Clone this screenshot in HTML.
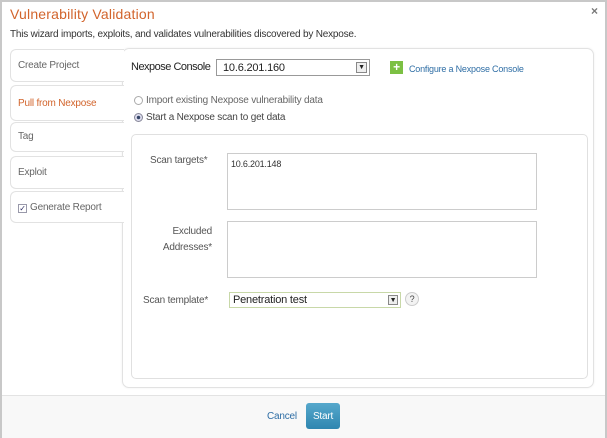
<!DOCTYPE html>
<html><head><style>
*{margin:0;padding:0;box-sizing:border-box}
body{width:607px;height:438px;overflow:hidden;background:#fff;font-family:"Liberation Sans",sans-serif;font-size:10px;color:#444;position:relative;letter-spacing:-0.2px}
.frame{position:absolute;left:0;top:0;width:607px;height:438px;border:2px solid #c8c8c8;border-bottom:none}
.a{position:absolute}
.tab{position:absolute;left:10px;width:114px;background:#fff;border:1px solid #e2e2e2;border-right:none;border-radius:6px 0 0 6px;padding:10px 0 0 7px;color:#666;font-size:10px}
.ta{position:absolute;background:#fff;border:1px solid #ccc}
</style></head><body>
<div class="frame"></div>
<div class="a" style="left:10px;top:6px;font-size:14px;color:#d2642c;letter-spacing:0.2px">Vulnerability Validation</div>
<div class="a" style="left:591px;top:4px;font-size:12px;color:#777;font-weight:bold">×</div>
<div class="a" style="left:10px;top:29px;font-size:10px;color:#333">This wizard imports, exploits, and validates vulnerabilities discovered by Nexpose.</div>

<div class="a" style="left:122px;top:48px;width:472px;height:340px;border:1px solid #e2e2e2;border-radius:7px;box-shadow:0 0 2px #eee"></div>
<div class="tab" style="top:49px;height:33px">Create Project</div>
<div class="tab" style="top:85px;height:36px;color:#d2642c;z-index:2;padding-top:12px">Pull from Nexpose</div>
<div class="tab" style="top:122px;height:30px;padding-top:8px">Tag</div>
<div class="tab" style="top:156px;height:33px">Exploit</div>
<div class="tab" style="top:191px;height:32px;padding-top:10px"><span style="display:inline-block;width:9px;height:9px;border:1px solid #99a;font-size:8px;line-height:8px;text-align:center;color:#336;vertical-align:-1px;margin-right:3px">✓</span>Generate Report</div>

<div class="a" style="left:131px;top:61px;font-size:11px;color:#222;letter-spacing:-0.5px">Nexpose Console</div>
<div class="a" style="left:216px;top:59px;width:154px;height:17px;border:1px solid #999;font-size:11px;color:#222;padding:2px 0 0 6px">10.6.201.160<span style="position:absolute;right:2px;top:2px;width:11px;height:11px;border:1px solid #888;background:#eee;font-size:7px;line-height:10px;text-align:center">▼</span></div>
<div class="a" style="left:390px;top:61px;width:13px;height:13px;background:#7cc043;color:#fff;font-weight:bold;font-size:12px;line-height:12px;text-align:center">+</div>
<div class="a" style="left:409px;top:64px;font-size:9px;color:#2f6ea5">Configure a Nexpose Console</div>

<div class="a" style="left:134px;top:96px;width:9px;height:9px;border:1px solid #aaa;border-radius:50%"></div>
<div class="a" style="left:146px;top:95px;color:#666">Import existing Nexpose vulnerability data</div>
<div class="a" style="left:134px;top:113px;width:9px;height:9px;border:1px solid #889;border-radius:50%;background:radial-gradient(#346 30%,#dde 40%)"></div>
<div class="a" style="left:146px;top:112px;color:#444">Start a Nexpose scan to get data</div>

<div class="a" style="left:131px;top:134px;width:457px;height:245px;border:1px solid #e0e0e0;border-radius:5px"></div>
<div class="a" style="left:150px;top:155px;color:#555">Scan targets*</div>
<div class="ta" style="left:227px;top:153px;width:310px;height:57px;font-size:9px;color:#333;padding:5px 0 0 3px">10.6.201.148</div>
<div class="a" style="left:150px;top:224px;color:#555;text-align:right;width:62px;line-height:16px">Excluded Addresses*</div>
<div class="ta" style="left:227px;top:221px;width:310px;height:57px"></div>
<div class="a" style="left:143px;top:295px;color:#555">Scan template*</div>
<div class="a" style="left:229px;top:292px;width:172px;height:16px;border:1px solid #c8d8a8;font-size:11px;color:#222;padding:1px 0 0 3px">Penetration test<span style="position:absolute;right:2px;top:2px;width:10px;height:10px;border:1px solid #888;background:#eee;font-size:7px;line-height:9px;text-align:center">▼</span></div>
<div class="a" style="left:405px;top:292px;width:14px;height:14px;border:1px solid #ccc;border-radius:50%;background:#f3f3f3;font-size:9px;text-align:center;line-height:12px;color:#444">?</div>

<div class="a" style="left:2px;top:395px;width:603px;height:43px;background:#f8f8f8;border-top:1px solid #e3e3e3"></div>
<div class="a" style="left:267px;top:411px;color:#2f6ea5;font-size:10px">Cancel</div>
<div class="a" style="left:306px;top:403px;width:34px;height:26px;background:linear-gradient(#56a8cc,#2f86b0);border-radius:3px;color:#fff;font-size:10px;display:flex;align-items:center;justify-content:center">Start</div>
</body></html>
